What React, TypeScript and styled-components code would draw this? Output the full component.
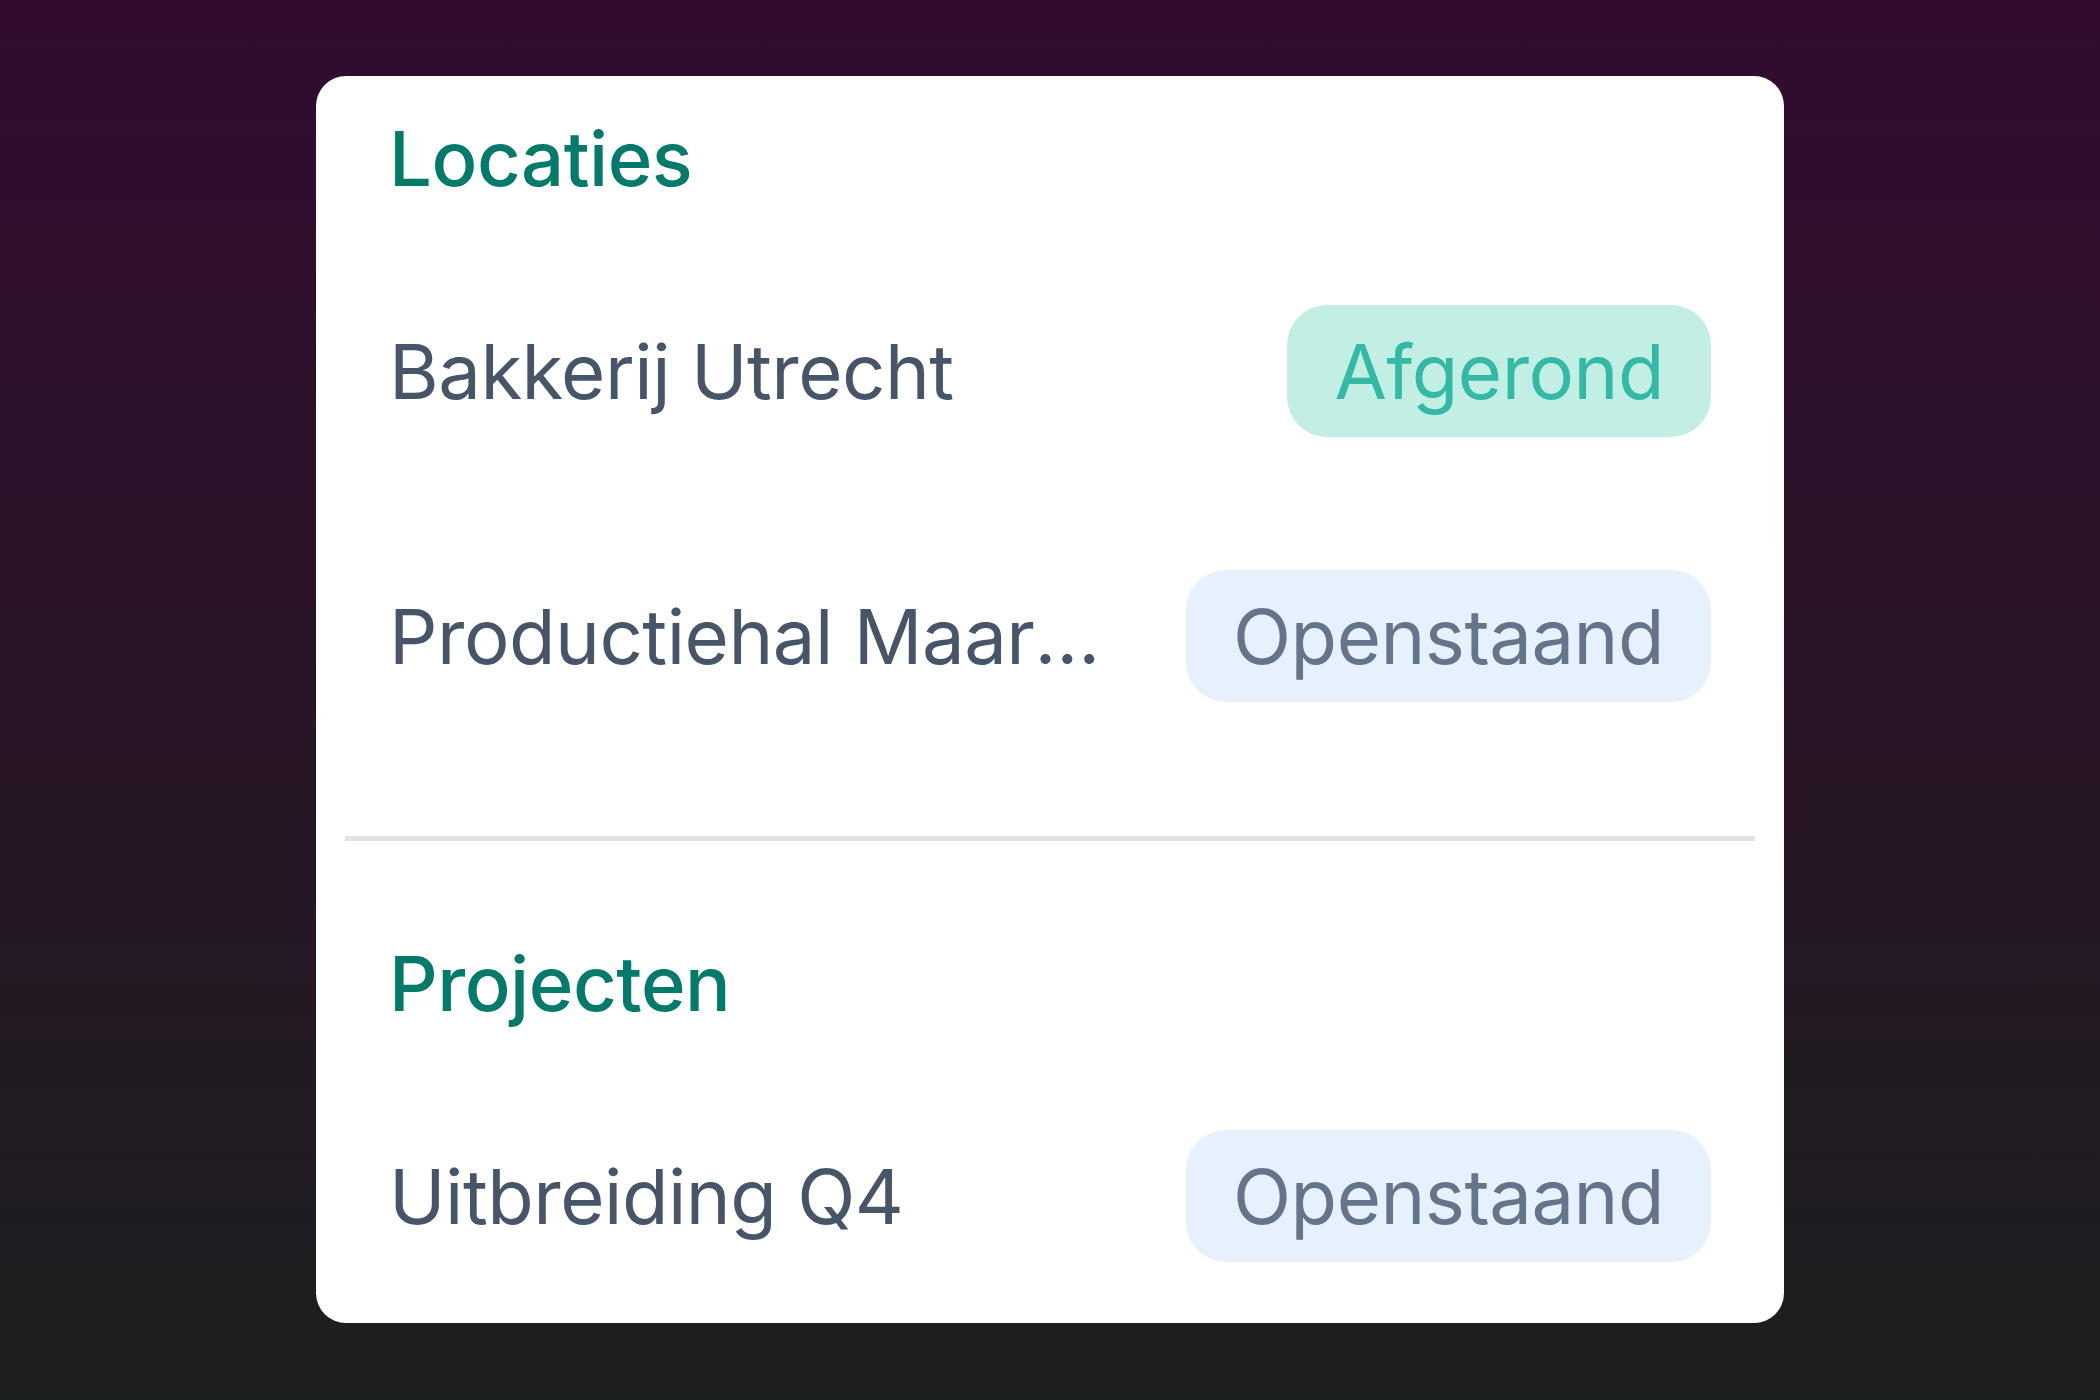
import React from "react";
import styled, { createGlobalStyle } from "styled-components";

const GlobalStyle = createGlobalStyle`
  html, body {
    margin: 0;
    padding: 0;
  }
  body {
    width: 2100px;
    height: 1400px;
    background: linear-gradient(180deg, #310c2f 0%, #2a1428 45%, #1c1f1f 100%);
    font-family: Inter, "Noto Sans", "Liberation Sans", sans-serif;
    -webkit-font-smoothing: antialiased;
  }
`;

const Page = styled.main`
  display: flex;
  justify-content: center;
  padding-top: 76px;
`;

const Card = styled.div`
  width: 1468px;
  box-sizing: border-box;
  background: #ffffff;
  border-radius: 30px;
  padding: 0 29px 61px;
  display: flex;
  flex-direction: column;
`;

const Section = styled.section<{ $top: number }>`
  display: flex;
  flex-direction: column;
  padding: ${(p) => p.$top}px 44px 0;
`;

const Heading = styled.h2`
  margin: 0;
  font-size: 76px;
  line-height: 92px;
  font-weight: 500;
  color: #047a6b;
  letter-spacing: -0.5px;
`;

const Rows = styled.div`
  display: flex;
  flex-direction: column;
  gap: 133px;
  margin-top: 101px;
`;

const Row = styled.div`
  display: flex;
  align-items: center;
  justify-content: space-between;
  gap: 84px;
`;

const Name = styled.span`
  flex: 1 1 auto;
  min-width: 0;
  font-size: 76px;
  line-height: 92px;
  font-weight: 400;
  color: #475569;
  white-space: nowrap;
  overflow: hidden;
  text-overflow: ellipsis;
  letter-spacing: -0.5px;
`;

const Badge = styled.span<{ $done?: boolean }>`
  flex: 0 0 auto;
  display: inline-flex;
  align-items: center;
  height: 132px;
  box-sizing: border-box;
  padding: 0 47px;
  border-radius: 40px;
  font-size: 76px;
  line-height: 92px;
  font-weight: 400;
  letter-spacing: -0.5px;
  background: ${(p) => (p.$done ? "#c3eee3" : "#e7f1fd")};
  color: ${(p) => (p.$done ? "#34b9a7" : "#64748b")};
`;

const Divider = styled.hr`
  margin: 134px 0 0;
  border: 0;
  height: 5px;
  background: #e1e3e1;
`;

type Item = { name: string; status: "Afgerond" | "Openstaand" };

const locaties: Item[] = [
  { name: "Bakkerij Utrecht", status: "Afgerond" },
  { name: "Productiehal Maarssen", status: "Openstaand" },
];

const projecten: Item[] = [{ name: "Uitbreiding Q4", status: "Openstaand" }];

const List = ({ items }: { items: Item[] }) => (
  <Rows>
    {items.map((it) => (
      <Row key={it.name}>
        <Name>{it.name}</Name>
        <Badge $done={it.status === "Afgerond"}>{it.status}</Badge>
      </Row>
    ))}
  </Rows>
);

export default function App() {
  return (
    <>
      <GlobalStyle />
      <Page>
        <Card>
          <Section $top={36}>
            <Heading>Locaties</Heading>
            <List items={locaties} />
          </Section>
          <Divider />
          <Section $top={96}>
            <Heading>Projecten</Heading>
            <List items={projecten} />
          </Section>
        </Card>
      </Page>
    </>
  );
}
